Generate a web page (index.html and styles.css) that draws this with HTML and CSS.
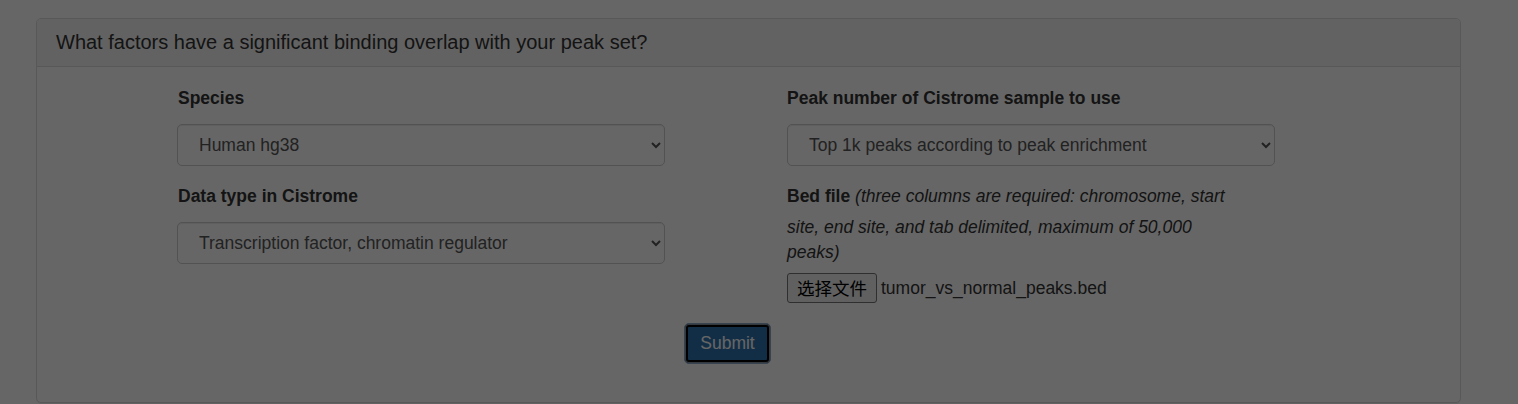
FILE: index.html
```html
<!DOCTYPE html>
<html>
<head>
<meta charset="utf-8">
<title>Cistrome</title>
<link rel="stylesheet" href="styles.css">
</head>
<body>
<div class="page">
  <div class="panel">
    <div class="panel-heading">
      <h3 class="panel-title">What factors have a significant binding overlap with your peak set?</h3>
    </div>
    <div class="panel-body">
      <form class="form">
        <div class="col col-left">
          <div class="form-group">
            <label class="lbl">Species</label>
            <select class="form-control">
              <option>Human hg38</option>
            </select>
          </div>
          <div class="form-group">
            <label class="lbl">Data type in Cistrome</label>
            <select class="form-control">
              <option>Transcription factor, chromatin regulator</option>
            </select>
          </div>
        </div>
        <div class="col">
          <div class="form-group">
            <label class="lbl">Peak number of Cistrome sample to use</label>
            <select class="form-control">
              <option>Top 1k peaks according to peak enrichment</option>
            </select>
          </div>
          <div class="form-group">
            <div class="note"><span class="strut"></span><b class="lbl-inline">Bed file</b> <i>(three columns are required: chromosome, start site, end site, and tab delimited, maximum of 50,000 peaks)</i></div>
            <div class="file-row">
              <span class="file-btn">选择文件</span><span class="file-name">tumor_vs_normal_peaks.bed</span>
            </div>
          </div>
        </div>
        <div class="actions">
          <button type="button" class="btn-primary">Submit</button>
        </div>
      </form>
    </div>
  </div>
</div>
<div class="backdrop"></div>
</body>
</html>
```
FILE: styles.css
```css
html, body {
  margin: 0;
  padding: 0;
  background: #fff;
}
body {
  font-family: "Liberation Sans", Arial, "Noto Sans CJK SC", sans-serif;
  font-size: 17.5px;
  line-height: 25px;
  color: #333;
  height: 404px;
  overflow: hidden;
}
.page {
  padding: 18px 0 0 36px;
}
.panel {
  width: 1423px;
  border: 1px solid #ddd;
  border-radius: 5px;
  background: #fff;
  box-shadow: 0 1px 1px rgba(0,0,0,.05);
}
.panel-heading {
  background: #f5f5f5;
  border-bottom: 1px solid #ddd;
  border-radius: 4px 4px 0 0;
  padding: 12px 19px 13px;
}
.panel-title {
  margin: 0;
  font-size: 20px;
  line-height: 22px;
  font-weight: 500;
  color: #333;
}
.panel-body {
  padding: 19px 0 38px 140px;
}
.form {
  display: grid;
  grid-template-columns: 488px 488px;
  column-gap: 122px;
  width: 1098px;
}
.form-group {
  margin-bottom: 18px;
}
.lbl {
  display: block;
  font-weight: bold;
  margin-bottom: 13px;
}
.col-left .lbl {
  padding-left: 1px;
}
.form-control {
  display: block;
  width: 488px;
  height: 42px;
  padding: 0 12px 0 17px;
  font-family: "Liberation Sans", Arial, sans-serif;
  font-size: 17.5px;
  color: #555;
  background: #fff;
  border: 1px solid #ccc;
  border-radius: 5px;
  box-shadow: inset 0 1px 1px rgba(0,0,0,.075);
}
.note {
  max-width: 445px;
}
.strut {
  display: inline-block;
  width: 0;
  height: 31px;
  vertical-align: top;
}
.lbl-inline {
  font-weight: bold;
}
.file-row {
  display: flex;
  align-items: center;
  margin-top: 8px;
}
.file-btn {
  font-family: "Noto Sans CJK SC", sans-serif;
  font-size: 17.5px;
  line-height: 26px;
  padding: 1px 9px;
  border: 1px solid #767676;
  border-radius: 3px;
  background: #efefef;
  color: #000;
  margin-right: 4px;
}
.file-name {
  color: #333;
}
.actions {
  grid-column: 1 / span 2;
  display: flex;
  justify-content: center;
  padding: 2px 0 0 3px;
}
.btn-primary {
  font-family: "Liberation Sans", Arial, sans-serif;
  font-size: 17.5px;
  line-height: 25px;
  padding: 7px 15px;
  color: #fff;
  background: #2f74b1;
  border: 1px solid #8aa7c4;
  border-radius: 5px;
  box-shadow: inset 0 0 0 1px #7f8f9f, inset 0 0 0 3px #000;
}
.backdrop {
  position: fixed;
  inset: 0;
  background: rgba(0,0,0,.6);
}
```
